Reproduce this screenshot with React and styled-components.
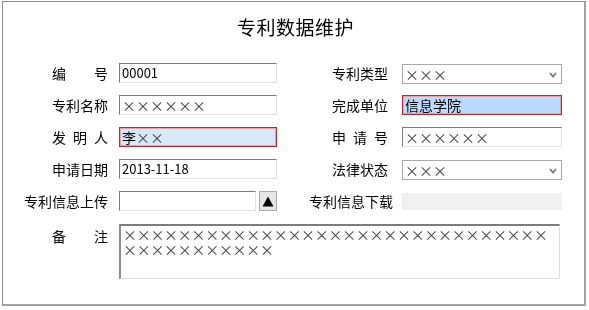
import React from 'react';
import styled, { createGlobalStyle, css } from 'styled-components';

const GlobalStyle = createGlobalStyle`
    html, body {
        margin: 0;
        padding: 0;
        background: #ffffff;
    }
    body {
        font-family: "Noto Sans CJK SC", "Liberation Sans", sans-serif;
        color: #000000;
        -webkit-font-smoothing: antialiased;
    }
`;

const Frame = styled.div`
    box-sizing: border-box;
    width: 584px;
    height: 305px;
    margin: 1px 0 0 2px;
    border-style: solid;
    border-width: 1px 2px 2px 1px;
    border-color: #8a8a8a #a3a3a3 #a3a3a3 #8a8a8a;
    padding-top: 13px;
    will-change: transform;
`;

const Title = styled.h1`
    margin: 0;
    font-size: 19px;
    font-weight: normal;
    line-height: 24px;
    text-align: center;
    letter-spacing: 0.5px;
    padding-left: 4px;
`;

const Form = styled.div`
    display: grid;
    grid-template-columns: 99px 158px 125px 160px;
    grid-auto-rows: 20px;
    row-gap: 12px;
    margin-top: 24px;
    padding-left: 17px;
`;

const Label = styled.div`
    font-size: 14px;
    line-height: 20px;
    text-align: right;
    white-space: nowrap;
    padding-right: ${({ $pr }) => ($pr ?? 11)}px;
    align-self: ${({ $top }) => ($top ? 'start' : 'center')};
    margin-top: ${({ $top }) => ($top ? '3px' : '0')};
`;

const Spread = styled.span`
    display: inline-flex;
    justify-content: space-between;
    width: 56px;
`;

const fieldText = css`
    font-family: "Noto Sans CJK SC", "Liberation Sans", sans-serif;
    font-size: ${({ $wide }) => ($wide ? '14px' : '13px')};
    font-feature-settings: ${({ $wide }) => ($wide ? '"fwid" 1' : 'normal')};
    color: ${({ $wide }) => ($wide ? '#4a4a4a' : '#000')};
`;

const TextBox = styled.div`
    box-sizing: border-box;
    height: 20px;
    padding: 0 2px;
    line-height: 18px;
    white-space: nowrap;
    overflow: hidden;
    background: #ffffff;
    border-style: solid;
    border-width: 1px;
    border-color: #7c7c7c #e2e2e2 #e2e2e2 #7c7c7c;
    ${fieldText};
    ${({ $required, $bg }) =>
        $required &&
        css`
            border-color: #b8262f;
            background: ${$bg};
            box-shadow: inset 0 0 0 1px #e6a3aa;
        `};
`;

const Required = styled.span`
    color: #000;
`;

const Select = styled.div`
    box-sizing: border-box;
    height: 20px;
    margin-top: 1px;
    padding: 0 2px;
    display: flex;
    align-items: center;
    justify-content: space-between;
    background: #ffffff;
    border: 1px solid #a8a8a8;
    ${fieldText};
`;

const Chevron = styled.svg`
    width: 8px;
    height: 6px;
    margin-right: 2px;
    margin-top: 2px;
`;

const UploadRow = styled.div`
    display: flex;
    gap: 3px;
`;

const FileBox = styled(TextBox)`
    flex: 1;
`;

const UploadButton = styled.div`
    box-sizing: border-box;
    width: 18px;
    height: 20px;
    display: flex;
    align-items: center;
    justify-content: center;
    background: #e6e6e6;
    border: 1px solid #a9a9a9;
`;

const Download = styled.div`
    height: 17px;
    margin-top: 2px;
    background: #f0f0f0;
`;

const Memo = styled.div`
    grid-column: 2 / span 3;
    grid-row: span 2;
    box-sizing: border-box;
    width: 441px;
    height: 55px;
    margin-top: 1px;
    padding: 1px 2px;
    line-height: 15px;
    letter-spacing: -0.3px;
    white-space: pre;
    overflow: hidden;
    background: #ffffff;
    border-style: solid;
    border-width: 2px 1px 1px 2px;
    border-color: #7c7c7c #dedede #dedede #8c8c8c;
    ${fieldText};
`;

const ChevronIcon = () => (
    <Chevron viewBox="0 0 8 6">
        <path d="M1 1 L4 4.5 L7 1" fill="none" stroke="#6b6b6b" strokeWidth="1.6" />
    </Chevron>
);

const memo = '×'.repeat(31) + '\n' + '×'.repeat(11);

export default function App() {
    return (
        <>
            <GlobalStyle />
            <Frame>
                <Title>专利数据维护</Title>
                <Form>
                    <Label>
                        <Spread>
                            <span>编</span>
                            <span>号</span>
                        </Spread>
                    </Label>
                    <TextBox>00001</TextBox>
                    <Label $pr={14}>专利类型</Label>
                    <Select $wide>
                        <span>×××</span>
                        <ChevronIcon />
                    </Select>

                    <Label>专利名称</Label>
                    <TextBox $wide>××××××</TextBox>
                    <Label $pr={14}>完成单位</Label>
                    <TextBox $wide $required $bg="#bcdafd">
                        <Required>信息学院</Required>
                    </TextBox>

                    <Label>
                        <Spread>
                            <span>发</span>
                            <span>明</span>
                            <span>人</span>
                        </Spread>
                    </Label>
                    <TextBox $wide $required $bg="#d7e8fb">
                        <Required>李</Required>××
                    </TextBox>
                    <Label $pr={14}>
                        <Spread>
                            <span>申</span>
                            <span>请</span>
                            <span>号</span>
                        </Spread>
                    </Label>
                    <TextBox $wide>××××××</TextBox>

                    <Label>申请日期</Label>
                    <TextBox>2013-11-18</TextBox>
                    <Label $pr={14}>法律状态</Label>
                    <Select $wide>
                        <span>×××</span>
                        <ChevronIcon />
                    </Select>

                    <Label>专利信息上传</Label>
                    <UploadRow>
                        <FileBox />
                        <UploadButton>
                            <svg width="12" height="11" viewBox="0 0 12 11">
                                <path d="M6 0.5 L11.5 10.5 L0.5 10.5 Z" fill="#000" />
                            </svg>
                        </UploadButton>
                    </UploadRow>
                    <Label $pr={9}>专利信息下载</Label>
                    <Download />

                    <Label $top>
                        <Spread>
                            <span>备</span>
                            <span>注</span>
                        </Spread>
                    </Label>
                    <Memo $wide>{memo}</Memo>
                </Form>
            </Frame>
        </>
    );
}
